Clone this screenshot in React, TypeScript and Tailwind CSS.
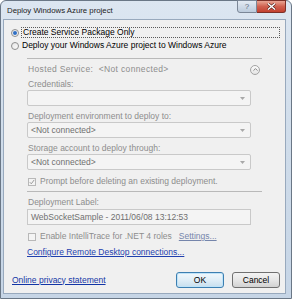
import { ChevronUp } from "lucide-react";

const font = "font-['Liberation_Sans',Arial,sans-serif]";

function Radio({ checked }: { checked?: boolean }) {
  return (
    <span className="w-[8px] h-[8px] rounded-full border border-[#8f8f8f] bg-gradient-to-br from-[#e6e6e6] to-[#fbfbfb] flex items-center justify-center shrink-0">
      {checked && <span className="w-[4px] h-[4px] rounded-full bg-[#2f6fc4]" />}
    </span>
  );
}

function Checkbox({ checked }: { checked?: boolean }) {
  return (
    <span className="w-[8px] h-[8px] border border-[#b8b8b8] bg-[#f4f4f4] flex items-center justify-center shrink-0">
      {checked && (
        <svg width="6" height="6" viewBox="0 0 6 6">
          <path d="M0.8 3.2 L2.3 4.8 L5.2 0.9" fill="none" stroke="#9a9a9a" strokeWidth="1" />
        </svg>
      )}
    </span>
  );
}

function Combo({ value }: { value?: string }) {
  return (
    <div className="w-[224px] h-[16px] border border-[#c9c9c9] rounded-[2px] bg-[#f4f4f4] flex items-center pl-[3px] pr-[5px] text-[#707070]">
      <span className="flex-1">{value}</span>
      <svg width="5" height="3" viewBox="0 0 5 3">
        <path d="M0 0 H5 L2.5 3 Z" fill="#a8a8a8" />
      </svg>
    </div>
  );
}

export default function App() {
  return (
    <div className={`w-[292px] h-[299px] overflow-hidden bg-white text-[8.5px] leading-[11px] ${font}`}>
      <div className="h-full rounded-t-[6px] border border-[#6a7786] bg-gradient-to-b from-[#dce6f1] via-[#cfdcea] to-[#c6d5e6] flex flex-col pl-[2px] pr-[5px] pb-[4px]">
        {/* Title bar */}
        <div className="h-[18px] flex justify-between shrink-0">
          <span className="pl-[4px] pt-[4px] text-[7.8px] text-[#1b1b1b]">Deploy Windows Azure project</span>
          <div className="flex -mt-px">
            <div className="w-[20px] h-[13px] rounded-bl-[3px] border border-[#7b8797] bg-gradient-to-b from-[#e4ebf3] to-[#bccbdc] flex items-center justify-center text-[8px] text-[#5d6b7c]">
              ?
            </div>
            <div className="w-[29px] h-[13px] rounded-br-[3px] border border-l-0 border-[#7c3028] bg-gradient-to-b from-[#e8a493] via-[#d0604f] to-[#c3402f] flex items-center justify-center">
              <svg width="9" height="7" viewBox="0 0 9 7">
                <path d="M1 0.5 L8 6.5 M8 0.5 L1 6.5" stroke="#4a1a14" strokeWidth="2.6" />
                <path d="M1 0.5 L8 6.5 M8 0.5 L1 6.5" stroke="#ffffff" strokeWidth="1.5" />
              </svg>
            </div>
          </div>
        </div>

        {/* Client area */}
        <div className="flex-1 border border-[#98a9bd] bg-[#f0f0f0] flex flex-col pr-[5px] pb-[5px]">
          <div className="mt-[7px] h-[11px] flex items-center">
            <span className="ml-[7px] mr-[2px]"><Radio checked /></span>
            <span className="flex-1 h-[11px] border border-dotted border-[#5a5a5a] pl-[1px] flex items-center text-black">
              Create Service Package Only
            </span>
          </div>
          <div className="mt-[2px] h-[11px] flex items-center">
            <span className="ml-[7px] mr-[3px]"><Radio /></span>
            <span className="text-black">Deploy your Windows Azure project to Windows Azure</span>
          </div>

          {/* Hosted service group */}
          <div className="ml-[23px] w-[235px] flex flex-col text-[#8d8d8d]">
            <div className="mt-[7px] h-px bg-[#b9b9b9]" />
            <div className="mt-[5px] h-[11px] flex items-center justify-between">
              <span className="pl-[1px] tracking-[0.35px]">Hosted Service:&nbsp; &lt;Not connected&gt;</span>
              <span className="w-[10px] h-[10px] mr-[2px] rounded-full border border-[#a3a3a3] bg-gradient-to-b from-[#fbfbfb] to-[#e4e4e4] flex items-center justify-center">
                <ChevronUp size={7} strokeWidth={3} color="#7a7a7a" />
              </span>
            </div>
            <div className="mt-[4px] h-[11px] pl-[1px]">Credentials:</div>
            <Combo />
            <div className="mt-[5px] h-[11px] pl-[1px]">Deployment environment to deploy to:</div>
            <Combo value="<Not connected>" />
            <div className="mt-[5px] h-[11px] pl-[1px]">Storage account to deploy through:</div>
            <Combo value="<Not connected>" />
            <div className="mt-[6px] h-[11px] flex items-center gap-[4px] pl-[1px]">
              <Checkbox checked />
              <span>Prompt before deleting an existing deployment.</span>
            </div>
            <div className="mt-[4px] h-px bg-[#b9b9b9]" />
            <div className="mt-[5px] h-[11px] pl-[1px]">Deployment Label:</div>
            <div className="mt-px w-[224px] h-[16px] border border-[#c9c9c9] bg-[#f4f4f4] flex items-center pl-[3px] text-[#707070]">
              WebSocketSample - 2011/06/08 13:12:53
            </div>
            <div className="mt-[6px] h-[11px] flex items-center gap-[4px] pl-[1px]">
              <Checkbox />
              <span>Enable IntelliTrace for .NET 4 roles</span>
              <span className="ml-[3px] underline text-[#7585ab]">Settings...</span>
            </div>
            <div className="mt-[5px] h-[11px] underline text-[#1f3fae]">Configure Remote Desktop connections...</div>
          </div>

          {/* Bottom row */}
          <div className="mt-auto h-[16px] flex items-center">
            <span className="ml-[8px] flex-1 underline text-[#1235a6]">Online privacy statement</span>
            <button className="w-[48px] h-[16px] rounded-[3px] border border-[#3c7fb1] bg-gradient-to-b from-[#f1f8fc] via-[#e0eef7] to-[#c8dfee] shadow-[inset_0_0_0_1px_#bfe3f8] text-black">
              OK
            </button>
            <button className="ml-[8px] w-[48px] h-[16px] rounded-[3px] border border-[#707070] bg-gradient-to-b from-[#f3f3f3] via-[#e6e6e6] to-[#d2d2d2] text-black">
              Cancel
            </button>
          </div>
        </div>
      </div>
    </div>
  );
}
